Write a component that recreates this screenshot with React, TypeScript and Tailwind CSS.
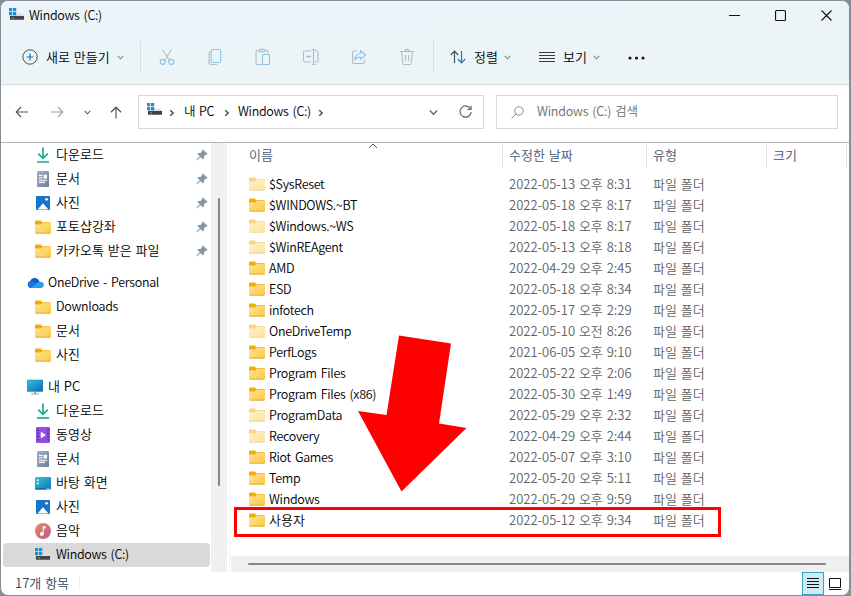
import { useId, useState } from "react";
import type { ReactNode } from "react";

// ===== Types =====
type IconName =
  | "download"
  | "document"
  | "picture"
  | "folder"
  | "cloud"
  | "pc"
  | "video"
  | "desktop"
  | "music"
  | "drive";

type NavItem = { id: string; label: string; icon: IconName; pinned?: boolean; root?: boolean };

type FileRow = { name: string; date: string; faded?: boolean };

// ===== Data =====
const NAV_GROUPS: NavItem[][] = [
  [
    { id: "q-down", label: "다운로드", icon: "download", pinned: true },
    { id: "q-docs", label: "문서", icon: "document", pinned: true },
    { id: "q-pics", label: "사진", icon: "picture", pinned: true },
    { id: "q-ps", label: "포토샵강좌", icon: "folder", pinned: true },
    { id: "q-kakao", label: "카카오톡 받은 파일", icon: "folder", pinned: true },
  ],
  [
    { id: "od", label: "OneDrive - Personal", icon: "cloud", root: true },
    { id: "od-down", label: "Downloads", icon: "folder" },
    { id: "od-docs", label: "문서", icon: "folder" },
    { id: "od-pics", label: "사진", icon: "folder" },
  ],
  [
    { id: "pc", label: "내 PC", icon: "pc", root: true },
    { id: "pc-down", label: "다운로드", icon: "download" },
    { id: "pc-video", label: "동영상", icon: "video" },
    { id: "pc-docs", label: "문서", icon: "document" },
    { id: "pc-desk", label: "바탕 화면", icon: "desktop" },
    { id: "pc-pics", label: "사진", icon: "picture" },
    { id: "pc-music", label: "음악", icon: "music" },
    { id: "pc-c", label: "Windows (C:)", icon: "drive" },
  ],
];

const FILES: FileRow[] = [
  { name: "$SysReset", date: "2022-05-13 오후 8:31", faded: true },
  { name: "$WINDOWS.~BT", date: "2022-05-18 오후 8:17" },
  { name: "$Windows.~WS", date: "2022-05-18 오후 8:17", faded: true },
  { name: "$WinREAgent", date: "2022-05-13 오후 8:18", faded: true },
  { name: "AMD", date: "2022-04-29 오후 2:45" },
  { name: "ESD", date: "2022-05-18 오후 8:34" },
  { name: "infotech", date: "2022-05-17 오후 2:29" },
  { name: "OneDriveTemp", date: "2022-05-10 오전 8:26", faded: true },
  { name: "PerfLogs", date: "2021-06-05 오후 9:10" },
  { name: "Program Files", date: "2022-05-22 오후 2:06" },
  { name: "Program Files (x86)", date: "2022-05-30 오후 1:49" },
  { name: "ProgramData", date: "2022-05-29 오후 2:32", faded: true },
  { name: "Recovery", date: "2022-04-29 오후 2:44", faded: true },
  { name: "Riot Games", date: "2022-05-07 오후 3:10" },
  { name: "Temp", date: "2022-05-20 오후 5:11" },
  { name: "Windows", date: "2022-05-29 오후 9:59" },
  { name: "사용자", date: "2022-05-12 오후 9:34" },
];

// ===== Helpers =====
const LATIN = "text-[12.5px] tracking-[-0.3px] [word-spacing:1.5px]";

// Latin names are set slightly tighter than Hangul ones
function labelClass(text: string) {
  return /[가-힣]/.test(text) ? "[word-spacing:1px]" : LATIN;
}

// ===== Icons =====
function Folder({ faded }: { faded?: boolean }) {
  const id = useId();
  return (
    <svg width="16" height="14" viewBox="0 0 16 14" className={faded ? "opacity-50" : ""}>
      <defs>
        <linearGradient id={id} x1="0" y1="0" x2="1" y2="1">
          <stop offset="0" stopColor="#ffe59a" />
          <stop offset="1" stopColor="#fdc83c" />
        </linearGradient>
      </defs>
      <path d="M0 1.5Q0 .5 1 .5H5.8L7.6 2.3H15Q16 2.3 16 3.3V5H0Z" fill="#f0ae0c" />
      <path d="M0 4.6H6L7.8 3H15Q16 3 16 4V12.2Q16 13.2 15 13.2H1Q0 13.2 0 12.2Z" fill={`url(#${id})`} />
      <path d="M.4 13.2H15.6" stroke="#dca52c" strokeWidth=".9" />
    </svg>
  );
}

function Drive() {
  return (
    <svg width="16" height="14" viewBox="0 0 16 14">
      <path d="M2 8l1-2.2h10.5L15 8z" fill="#dcdedf" />
      <path d="M0 0h3.2v3.2H0zM4 0h3.2v3.2H4zM0 4h3.2v3.2H0zM4 4h3.2v3.2H4z" fill="#1a8fdc" />
      <path d="M1 8h14v3.8H1z" fill="#414446" />
      <path d="M3 9.4h2v1.2H3z" fill="#3fe048" />
    </svg>
  );
}

function NavIcon({ name }: { name: IconName }) {
  const id = useId();
  switch (name) {
    case "folder":
      return <Folder />;
    case "drive":
      return (
        <div className="pb-px">
          <Drive />
        </div>
      );
    case "download":
      return (
        <svg width="16" height="16" viewBox="0 0 16 16" fill="none" stroke="#1fa98d" strokeWidth="1.7">
          <path d="M8 .5V11M3.2 6.6L8 11.4l4.8-4.8" />
          <path d="M2 15H14" />
        </svg>
      );
    case "document":
      return (
        <svg width="16" height="16" viewBox="0 0 16 16">
          <defs>
            <linearGradient id={id} x1="0" y1="0" x2="1" y2="1">
              <stop offset="0" stopColor="#a3b4c8" />
              <stop offset="1" stopColor="#6a809f" />
            </linearGradient>
          </defs>
          <rect x="2" y="0" width="12" height="16" rx="1" fill={`url(#${id})`} />
          <path d="M4 4.5h3.4M4 6.8h3.4M4 9.2h8M4 11.4h6" stroke="#fff" strokeWidth="1.1" />
          <path d="M8.6 3.8H12v3.6H8.6z" fill="#fff" />
        </svg>
      );
    case "picture":
      return (
        <svg width="16" height="16" viewBox="0 0 16 16">
          <rect x="1" y="1" width="14" height="14" rx="1" fill="#1378cc" />
          <path d="M2.6 14.4L8 8.2l5.4 6.2z" fill="#fff" />
          <circle cx="11.6" cy="4.3" r="1.4" fill="#e6f4ff" />
        </svg>
      );
    case "cloud":
      return (
        <svg width="17" height="12" viewBox="0 0 17 12" className="shrink-0">
          <path d="M3.6 11A3.6 3.6 0 0 1 3 4.2 5 5 0 0 1 11.6 3L13 5.5 8 11Z" fill="#0a5fbf" />
          <path d="M3.6 11A3.6 3.6 0 0 1 3.4 4Q6 3.6 8 5.4L14 11Z" fill="#1877d2" />
          <path d="M4 11L10.2 5.6A4 4 0 0 1 13.6 4.8 3.1 3.1 0 0 1 13.8 11Z" fill="#2b9fee" />
        </svg>
      );
    case "pc":
      return (
        <svg width="16" height="16" viewBox="0 0 16 16">
          <defs>
            <linearGradient id={id} x1="0" y1="0" x2="1" y2="1">
              <stop offset="0" stopColor="#2fc9e4" />
              <stop offset="1" stopColor="#1064ae" />
            </linearGradient>
          </defs>
          <rect x="0" y="1" width="16" height="11.6" rx="1" fill={`url(#${id})`} stroke="#1b7ba6" strokeWidth=".5" />
          <path d="M7 12.6h2v2H7zM4 14.6h8v1H4z" fill="#9aa3aa" />
        </svg>
      );
    case "video":
      return (
        <svg width="16" height="16" viewBox="0 0 16 16">
          <rect x="1" y="0" width="14" height="16" rx="1" fill="#9150e0" />
          <path
            d="M2.2 2.4h1.5v1.5H2.2zM2.2 5.6h1.5v1.5H2.2zM2.2 8.8h1.5v1.5H2.2zM2.2 12h1.5v1.5H2.2zM12.3 2.4h1.5v1.5h-1.5zM12.3 5.6h1.5v1.5h-1.5zM12.3 8.8h1.5v1.5h-1.5zM12.3 12h1.5v1.5h-1.5z"
            fill="#4c2391"
          />
          <path d="M5.8 4.8L11 8l-5.2 3.2z" fill="#fff" />
        </svg>
      );
    case "desktop":
      return (
        <svg width="16" height="13" viewBox="0 0 16 13">
          <defs>
            <linearGradient id={id} x1="0" y1="0" x2="1" y2="1">
              <stop offset="0" stopColor="#34c8d8" />
              <stop offset="1" stopColor="#0f72bd" />
            </linearGradient>
          </defs>
          <rect x="0" y="0" width="16" height="12.5" rx="1" fill={`url(#${id})`} />
          <path d="M2 2.4h1.6V4H2zM2 5.6h1.6v1.6H2z" fill="#fff" />
          <path d="M0 11.4h11.5v1.1H1Q0 12.5 0 11.5z" fill="#0c5485" />
          <path d="M11.5 11.4h1v1h-1zM13.3 11.4h1v1h-1z" fill="#fff" />
        </svg>
      );
    case "music":
      return (
        <svg width="16" height="16" viewBox="0 0 16 16">
          <defs>
            <linearGradient id={id} x1="0" y1="0" x2="1" y2="1">
              <stop offset="0" stopColor="#ee8a55" />
              <stop offset="1" stopColor="#b4589a" />
            </linearGradient>
          </defs>
          <circle cx="8" cy="8" r="8" fill={`url(#${id})`} />
          <circle cx="6.8" cy="11" r="1.9" fill="#fff" />
          <path d="M7.7 11V3.2h3v2.2H8.7V11z" fill="#fff" />
        </svg>
      );
  }
}

function Pin() {
  return (
    <svg width="12" height="12" viewBox="0 0 12 12" fill="#8494a0">
      <path d="M7 .6L11.4 5 10.2 5.9 9.6 5.7 7.9 7.5 7.8 9.6 7 10.4 4.5 8 1.2 11.2.3 11.4.6 10.6 3.8 7.3 1.4 4.8 2.4 4 4.6 4 6.2 2.3 6 1.6Z" />
    </svg>
  );
}

function Chevron({ className = "", size = 7 }: { className?: string; size?: number }) {
  return (
    <svg width={size} height={size} viewBox="0 0 8 8" fill="none" stroke="currentColor" strokeWidth="1.2" className={className}>
      <path d="M.8 2.2L4 5.5l3.2-3.3" />
    </svg>
  );
}

function Crumb() {
  return (
    <svg width="6" height="8" viewBox="0 0 6 8" fill="none" stroke="#4f4f4f" strokeWidth="1.5" className="mt-px shrink-0">
      <path d="M1.2 1.2L4.2 4 1.2 6.8" />
    </svg>
  );
}

// 18px line icon in the command bar
function BarIcon({ children }: { children: ReactNode }) {
  return (
    <svg width="18" height="18" viewBox="0 0 18 18" fill="none" stroke="#b4bcc2" strokeWidth="1.1">
      {children}
    </svg>
  );
}

const BLUE = "#8cc4e8";

// ===== Sections =====
function TitleBar() {
  return (
    <div className="flex h-[29px] items-center pl-2">
      <div className="pb-0.5">
        <Drive />
      </div>
      <span className={`-mt-px ml-1 ${LATIN}`}>Windows (C:)</span>
      <div className="ml-auto flex items-center gap-[35px] pr-[17px]">
        <svg width="11" height="11" viewBox="0 0 11 11" stroke="#111" strokeWidth="1">
          <path d="M0 5.5H11" />
        </svg>
        <svg width="11" height="11" viewBox="0 0 11 11" fill="none" stroke="#111" strokeWidth="1.1">
          <rect x=".55" y=".55" width="9.9" height="9.9" rx="1" />
        </svg>
        <svg width="11" height="11" viewBox="0 0 11 11" stroke="#111" strokeWidth="1.1">
          <path d="M.5.5l10 10M10.5.5l-10 10" />
        </svg>
      </div>
    </div>
  );
}

function CommandBar() {
  return (
    <div className="flex h-[54px] items-center pl-[21px]">
      <svg width="16" height="16" viewBox="0 0 16 16" fill="none">
        <circle cx="8" cy="8" r="7.2" stroke="#4a4f53" strokeWidth="1" />
        <path d="M8 4.6v6.8M4.6 8h6.8" stroke="#1874bd" strokeWidth="1.2" />
      </svg>
      <span className="ml-2 w-[64px] whitespace-nowrap [word-spacing:1px]">새로 만들기</span>
      <Chevron className="ml-[7px] text-[#7d8488]" />
      <div className="ml-4 h-8 w-px bg-[#d8dee2]" />

      <div className="ml-[17px] flex gap-[30px]">
        <BarIcon>
          <path d="M4.5 1.5L11.3 12M13.5 1.5L6.7 12" />
          <g stroke={BLUE} strokeWidth="1.2">
            <circle cx="4.7" cy="13.8" r="2.5" />
            <circle cx="13.3" cy="13.8" r="2.5" />
          </g>
        </BarIcon>
        <BarIcon>
          <path d="M5 3.5Q3 4 3 6v8Q3 16.5 5.5 16.5H11" />
          <rect x="5.2" y="1.5" width="9.5" height="13" rx="1.6" stroke={BLUE} />
        </BarIcon>
        <BarIcon>
          <path d="M8 16.5H3.5Q2 16.5 2 15V4Q2 2.5 3.5 2.5H5M11 2.5h1.5Q14 2.5 14 4v1.5" />
          <rect x="5" y="1.4" width="6" height="2.2" rx="1" />
          <rect x="8.5" y="6.5" width="7" height="10" rx="1" stroke={BLUE} />
        </BarIcon>
        <BarIcon>
          <path d="M9 3H3Q1.5 3 1.5 4.5v8Q1.5 14 3 14h6M13 3h1.5Q16 3 16 4.5v8Q16 14 14.5 14H13" />
          <path d="M11.5 1.5V16.5M9.5 1.5h4M9.5 16.5h4" stroke={BLUE} />
          <path d="M4 8.5h5" stroke={BLUE} strokeWidth="1.6" />
        </BarIcon>
        <BarIcon>
          <path d="M7 3H4Q2.5 3 2.5 4.5v9.5Q2.5 15.5 4 15.5h9Q14.5 15.5 14.5 14v-2" />
          <path d="M10.5 2.5L15.5 7l-5 4.3V9Q7 8.8 4.8 12 5.4 5.7 10.5 5.2Z" stroke={BLUE} strokeLinejoin="round" />
        </BarIcon>
        <BarIcon>
          <path d="M2 3.5H16M3.5 3.5L4.8 15Q5 16.5 6.4 16.5h5.2Q13 16.5 13.2 15L14.5 3.5M6.8 3.5Q6.8 1.4 9 1.4t2.2 2.1M7.5 7v6M10.5 7v6" />
        </BarIcon>
      </div>

      <div className="ml-[17px] h-8 w-px bg-[#d8dee2]" />
      <svg width="16" height="14" viewBox="0 0 16 14" fill="none" strokeWidth="1.2" className="ml-4">
        <path d="M4.5 13V1.2M.8 5L4.5 1.2 8.2 5" stroke="#4a4f53" />
        <path d="M11.5 1v11.8M7.8 9l3.7 3.8L15.2 9" stroke="#1b78c8" />
      </svg>
      <span className="ml-2 w-[25px] whitespace-nowrap">정렬</span>
      <Chevron className="ml-[5px] text-[#7d8488]" />
      <svg width="16" height="12" viewBox="0 0 16 12" stroke="#3a3d40" strokeWidth="1" className="ml-[28px]">
        <path d="M0 1.5H16M0 4.5H16M0 7.5H16M0 10.5H16" />
      </svg>
      <span className="ml-2 w-[25px] whitespace-nowrap">보기</span>
      <Chevron className="ml-[5px] text-[#7d8488]" />
      <svg width="17" height="4" viewBox="0 0 17 4" fill="#1a1a1a" className="ml-[28px] mt-[2px]">
        <circle cx="2" cy="2" r="1.6" />
        <circle cx="8.5" cy="2" r="1.6" />
        <circle cx="15" cy="2" r="1.6" />
      </svg>
    </div>
  );
}

function AddressRow() {
  return (
    <div className="flex h-[57px] items-center pb-[3px] pl-[14px]">
      <svg width="14" height="12" viewBox="0 0 14 12" fill="none" stroke="#555" strokeWidth="1.2">
        <path d="M13 6H1.2M6 1L1.2 6 6 11" />
      </svg>
      <svg width="14" height="12" viewBox="0 0 14 12" fill="none" stroke="#a2a2a2" strokeWidth="1.2" className="ml-[21px]">
        <path d="M1 6H12.8M8 1l4.8 5L8 11" />
      </svg>
      <Chevron className="ml-5 text-[#555]" />
      <svg width="12" height="13" viewBox="0 0 12 13" fill="none" stroke="#555" strokeWidth="1.2" className="ml-[19px]">
        <path d="M6 12.5V1.2M.9 6.2L6 1.2l5.1 5" />
      </svg>

      <div className="ml-4 flex h-[34px] w-[346px] items-center border border-[#d9d9d9] bg-white pl-2">
        <div className="pb-1">
          <Drive />
        </div>
        <div className="ml-[6px]"><Crumb /></div>
        <span className="-mt-[2px] ml-[9px] w-[31px] whitespace-nowrap text-[12.5px] tracking-[-0.2px] [word-spacing:1px]">내 PC</span>
        <div className="ml-[9px]"><Crumb /></div>
        <span className={`-mt-[2px] ml-2 w-[73px] whitespace-nowrap ${LATIN}`}>Windows (C:)</span>
        <div className="ml-[7px]"><Crumb /></div>
        <Chevron size={9} className="ml-auto text-[#666]" />
        <svg width="13" height="14" viewBox="0 0 13 14" fill="none" stroke="#666" strokeWidth="1.2" className="ml-[21px] mr-[11px]">
          <path d="M11.7 4.2A5.6 5.6 0 1 0 12.2 7M12 .8v3.7H8.3" />
        </svg>
      </div>

      <div className="ml-3 flex h-[34px] w-[342px] items-center border border-[#d9d9d9] bg-white pl-[14px] text-[#6b6b6b]">
        <svg width="13" height="13" viewBox="0 0 13 13" fill="none" stroke="#8a8a8a" strokeWidth="1">
          <circle cx="8" cy="5" r="4.2" />
          <path d="M5 8L.6 12.4" />
        </svg>
        <span className="-mt-[2px] ml-[13px] text-[12.5px] tracking-[-0.2px] [word-spacing:1.5px]">Windows (C:) 검색</span>
      </div>
    </div>
  );
}

function Sidebar({ selected, onSelect }: { selected: string; onSelect: (id: string) => void }) {
  return (
    <nav className="flex w-[210px] flex-col gap-2 pl-[2px] pr-px">
      {NAV_GROUPS.map((group, i) => (
        <ul key={i}>
          {group.map((item) => (
            <li
              key={item.id}
              onClick={() => onSelect(item.id)}
              className={`flex h-6 items-center rounded-sm pr-[2px] ${item.root ? "pl-6" : "pl-8"} ${
                item.id === selected ? "bg-[#d9d9d9]" : ""
              }`}
            >
              <div className="flex w-4 justify-center">
                <NavIcon name={item.icon} />
              </div>
              <span className={`-mt-[3px] ml-[5px] whitespace-nowrap ${labelClass(item.label)}`}>{item.label}</span>
              {item.pinned && (
                <span className="ml-auto">
                  <Pin />
                </span>
              )}
            </li>
          ))}
        </ul>
      ))}
    </nav>
  );
}

function FileList() {
  return (
    <div className="relative flex-1">
      <div className="flex h-[25px] text-[#43566f]">
        <div className="w-[272px] border-r border-[#e5e5e5] pl-[18px] pt-[3px]">이름</div>
        <div className="w-[144px] border-r border-[#e5e5e5] pl-[6px] pt-[3px] [word-spacing:1px]">수정한 날짜</div>
        <div className="w-[120px] border-r border-[#e5e5e5] pl-[6px] pt-[3px]">유형</div>
        <div className="w-[80px] border-r border-[#e5e5e5] pl-[6px] pt-[3px]">크기</div>
      </div>
      <svg width="10" height="6" viewBox="0 0 10 6" fill="none" stroke="#555" className="absolute left-[137px] top-0">
        <path d="M1 5L5 1l4 4" />
      </svg>

      <div className="pt-[5px]">
        {FILES.map((f) => (
          <div key={f.name} className="flex h-[21px] items-center whitespace-nowrap pl-[18px] text-[#626262]">
            <div className="w-[20px]">
              <Folder faded={f.faded} />
            </div>
            <span className={`w-[240px] text-black ${labelClass(f.name)}`}>{f.name}</span>
            <span className="w-[144px] [word-spacing:1px]">{f.date}</span>
            <span className="[word-spacing:1px]">파일 폴더</span>
          </div>
        ))}
      </div>

      {/* marker around the last row, and the arrow that points at it */}
      <div className="absolute left-[3px] top-[364px] h-[30px] w-[487px] border-[3px] border-[#ff0000]" />
      <svg width="110" height="158" viewBox="0 0 110 158" className="absolute left-[126px] top-[192px]">
        <path d="M42 .5L94 8.5 82 88.5 109.5 93 44.5 156.5 1 76 29.5 80Z" fill="#ff0000" />
      </svg>
    </div>
  );
}

function StatusBar() {
  return (
    <div className="flex h-[23px] items-center pl-[14px] text-[#33475f]">
      <span className="-mt-px w-[65px] border-r border-[#eee] leading-[14px] [word-spacing:1px]">17개 항목</span>
      <div className="ml-auto flex h-[23px] w-[22px] items-center justify-center border border-[#3c9fc4] bg-[#cdeaf5]">
        <svg width="12" height="11" viewBox="0 0 12 11" stroke="#111" strokeWidth="1">
          <path d="M0 .5H12M0 3.5H12M0 6.5H12M0 9.5H12" />
        </svg>
      </div>
      <svg width="12" height="12" viewBox="0 0 12 12" fill="none" stroke="#111" strokeWidth="1" className="ml-[5px] mr-2">
        <path d="M.5.5H11.5V9.5H.5ZM0 11.5H12" />
      </svg>
    </div>
  );
}

export default function App() {
  const [selected, setSelected] = useState("pc-c");

  return (
    <div className="h-[596px] w-[851px] bg-[#7f9199]">
      <div className="flex h-[596px] w-[850px] flex-col overflow-hidden rounded-lg border border-[#858e94] bg-white font-['Noto_Sans_CJK_KR',sans-serif] text-[13px] leading-[18px] font-[350] text-black">
        <header className="border-b border-[#d9dcde] bg-linear-to-br from-[#ebf4fa] to-[#edf4f7]">
          <TitleBar />
          <CommandBar />
        </header>
        <AddressRow />
        <div className="flex h-[430px] border-t border-[#b5b5b5]">
          <Sidebar selected={selected} onSelect={setSelected} />
          <div className="flex w-4 justify-center bg-[#f0f0f0] pt-[55px]">
            <div className="h-[288px] w-[2px] rounded bg-[#858585]" />
          </div>
          <div className="ml-[2px] w-px bg-[#f3f3f3]" />
          <div className="ml-px flex flex-1 flex-col">
            <FileList />
            <div className="flex h-4 items-center bg-[#f0f0f0] pl-[17px]">
              <div className="h-[2px] w-[578px] rounded bg-[#858585]" />
            </div>
          </div>
        </div>
        <StatusBar />
      </div>
    </div>
  );
}
